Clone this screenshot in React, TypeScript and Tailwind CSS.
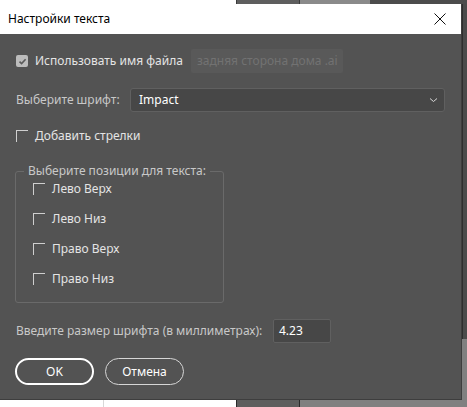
import React from "react";

const font = { fontFamily: '"Noto Sans", "Liberation Sans", sans-serif' };

function Box({ checked }: { checked?: boolean }) {
  if (checked) {
    return (
      <span className="flex h-[12px] w-[12px] shrink-0 items-center justify-center rounded-[2px] bg-[#bcbcbc]">
        <svg width="9" height="9" viewBox="0 0 9 9">
          <path d="M1.5 4.6 L3.6 6.6 L7.6 2.2" fill="none" stroke="#5a5a5a" strokeWidth="1.6" />
        </svg>
      </span>
    );
  }
  return <span className="h-[12px] w-[12px] shrink-0 border-l border-t border-[#cfcfcf]" />;
}

function Check({ label, checked }: { label: string; checked?: boolean }) {
  return (
    <label className="flex h-[20px] items-center gap-[7px] text-[12px] leading-[16px] text-[#e4e4e4]">
      <Box checked={checked} />
      <span>{label}</span>
    </label>
  );
}

const positions = ["Лево Верх", "Лево Низ", "Право Верх", "Право Низ"];

export default function App() {
  return (
    <div className="flex h-[407px] w-[467px] flex-col overflow-hidden bg-[#808080]" style={font}>
      <div className="flex h-[4px] shrink-0">
        <div className="w-[236px] bg-white" />
        <div className="w-[64px] border-x border-[#3a3a3a] bg-[#5e5e5e]" />
        <div className="w-[70px] bg-[#8a8a8a]" />
        <div className="flex-1 bg-[#4c4c4c]" />
      </div>

      <div className="flex h-[396px] shrink-0">
        <div className="flex w-[462px] shrink-0 flex-col border-b border-r border-[#3e3e3e] bg-[#535353]">
          <div className="flex h-[30px] shrink-0 items-center justify-between bg-white pl-[8px] pr-[15px]">
            <span className="text-[12px] text-black">Настройки текста</span>
            <svg width="12" height="12" viewBox="0 0 12 12">
              <path d="M0.5 0.5 L11.5 11.5 M11.5 0.5 L0.5 11.5" stroke="#111" strokeWidth="1" />
            </svg>
          </div>

          <div className="flex flex-col px-[16px]">
            <div className="mt-[15px] flex h-[24px] items-center">
              <div className="w-[175px]">
                <Check label="Использовать имя файла" checked />
              </div>
              <div className="flex h-[24px] w-[152px] items-center rounded-[2px] bg-[#595959] pl-[6px] text-[12px] text-[#727272]">
                задняя сторона дома .ai
              </div>
            </div>

            <div className="mt-[15px] flex h-[24px] items-center">
              <span className="w-[114px] text-[12px] text-[#c8c8c8]">Выберите шрифт:</span>
              <div className="flex h-[24px] flex-1 items-center justify-between rounded-[3px] border border-[#606060] bg-[#474747] pl-[8px] pr-[6px] text-[12px] text-white">
                <span>Impact</span>
                <svg width="9" height="6" viewBox="0 0 9 6">
                  <path d="M1 1.5 L4.5 4.5 L8 1.5" fill="none" stroke="#d8d8d8" strokeWidth="1" />
                </svg>
              </div>
            </div>

            <div className="mt-[14px]">
              <Check label="Добавить стрелки" />
            </div>

            <fieldset className="ml-[-1px] mt-[19px] w-[209px] rounded-[3px] border border-[#6a6a6a] pb-[13px]">
              <legend className="ml-[8px] px-[4px] text-[12px] leading-[12px] text-[#c8c8c8]">
                Выберите позиции для текста:
              </legend>
              <div className="mt-[2px] ml-[17px] flex flex-col gap-[10px]">
                {positions.map((p) => (
                  <Check key={p} label={p} />
                ))}
              </div>
            </fieldset>

            <div className="mt-[16px] flex h-[24px] items-center">
              <span className="w-[257px] text-[12px] text-[#c8c8c8]">
                Введите размер шрифта (в миллиметрах):
              </span>
              <div className="flex h-[24px] w-[58px] items-center rounded-[2px] border border-[#606060] bg-[#474747] pl-[5px] text-[12px] text-white">
                4.23
              </div>
            </div>

            <div className="mt-[15px] flex gap-[11px]">
              <button className="-ml-[1px] h-[27px] w-[79px] rounded-full border-2 border-white text-[12px] text-white">
                OK
              </button>
              <button className="h-[27px] w-[79px] rounded-full border border-[#d6d6d6] text-[12px] text-white">
                Отмена
              </button>
            </div>
          </div>
        </div>
        <div className="flex flex-1 flex-col">
          <div className="h-[335px] border-l border-[#2e2e2e] bg-[#4b4b4b]" />
          <div className="flex-1 bg-[#808080]" />
        </div>
      </div>

      <div className="flex flex-1">
        <div className="w-[104px] border-r border-[#d8d8d8] bg-white" />
        <div className="w-[132px] bg-white" />
        <div className="w-[64px] border-x border-[#2a2a2a] bg-[#5e5e5e]" />
        <div className="flex-1 bg-[#808080]" />
      </div>
    </div>
  );
}
